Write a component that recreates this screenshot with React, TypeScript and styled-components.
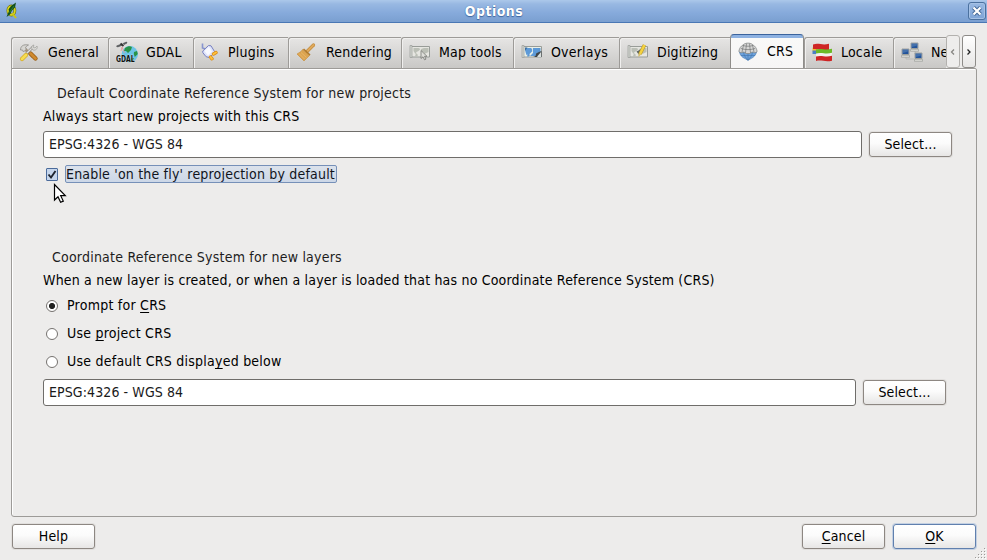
import React from "react";
import styled, { createGlobalStyle, css } from "styled-components";

const GlobalStyle = createGlobalStyle`
  html, body, #root { margin: 0; width: 987px; height: 560px; overflow: hidden; }
  * { box-sizing: border-box; }
  body, button, input {
    font-family: "DejaVu Sans Condensed", "DejaVu Sans", sans-serif;
    font-stretch: condensed;
    font-size: 14px;
    line-height: 16px;
    color: #000;
  }
  svg { display: block; flex: none; }
`;

const Dialog = styled.main`
  width: 987px;
  height: 560px;
  display: flex;
  flex-direction: column;
  background: #edeceb;
  position: relative;
`;

const TitleBar = styled.header`
  height: 23px;
  flex: none;
  display: grid;
  grid-template-columns: 27px 1fr 27px;
  align-items: center;
  padding: 0 0 1px 4px;
  background: linear-gradient(#a7c4e8 0, #98b8e2 3px, #86aadb 12px, #7a9fd0 21px);
  border-top: 1px solid #a9c6e9;
  border-bottom: 1px solid #4a77b4;
`;

const Title = styled.h1`
  margin: 0;
  padding-right: 3px;
  font-size: 14px;
  line-height: 16px;
  font-weight: bold;
  letter-spacing: 0.45px;
  text-align: center;
  color: #fff;
  text-shadow: 0 0 1px #4068a0, 0 1px 1px #4068a0;
`;

const CloseButton = styled.button`
  width: 18px;
  height: 18px;
  justify-self: end;
  margin: 0 1px 0 0;
  padding: 3px;
  border: 1px solid #4b719f;
  border-radius: 3px;
  background: linear-gradient(#98b8e2, #7fa5d7);
  box-shadow: inset 0 0 0 1px #a5c1e5;
`;

const TabRow = styled.nav`
  height: 46px;
  flex: none;
  display: flex;
  align-items: flex-end;
  padding: 0 11px 0 11px;
`;

const TabStrip = styled.div`
  display: flex;
  align-items: flex-end;
  width: 935px;
  height: 35px;
  overflow: hidden;
`;

const Tab = styled.div<{ $w: number; $gap: number; $active?: boolean }>`
  flex: none;
  display: flex;
  align-items: center;
  width: ${(p) => p.$w}px;
  gap: ${(p) => p.$gap}px;
  height: 32px;
  padding: 0 0 2px 7px;
  white-space: nowrap;
  border: 1px solid #9d9b98;
  border-right: 0;
  border-radius: 3px 0 0 0;
  background: linear-gradient(#e6e5e4, #c9c8c6);
  box-shadow: inset 1px 1px 0 #f0efee;
  ${(p) =>
    p.$active &&
    css`
      height: 35px;
      padding-bottom: 3px;
      border: 1px solid #8f8d8a;
      border-top: 1px solid #3b639c;
      border-bottom: 0;
      border-radius: 4px 4px 0 0;
      background: linear-gradient(#8db1e1 0, #8db1e1 3px, #f9f9f8 3px, #f6f5f5 100%);
      box-shadow: none;
    `}
`;

const TabLabel = styled.span`
  letter-spacing: 0.2px;
`;

const ScrollButtons = styled.div`
  display: flex;
  width: 30px;
  height: 34px;
  align-self: flex-end;
  margin-bottom: 0;
  gap: 2px;
`;

const ScrollButton = styled.button<{ $disabled?: boolean }>`
  width: 14px;
  height: 33px;
  padding: 0;
  display: grid;
  place-items: center;
  border: 1px solid ${(p) => (p.$disabled ? "#b3b1ae" : "#8d8b88")};
  border-radius: 3px;
  background: ${(p) => (p.$disabled ? "#eeedec" : "linear-gradient(#fff, #e7e6e5)")};
`;

const Panel = styled.section`
  width: 966px;
  height: 449px;
  flex: none;
  margin: -1px 0 0 11px;
  padding: 16px 24px 0 31px;
  border: 1px solid #9d9b98;
  border-radius: 0 2px 3px 3px;
  background: #edeceb;
  box-shadow: inset 1px 1px 0 #fff;
`;

const Group = styled.fieldset<{ $top?: number }>`
  display: flex;
  flex-direction: column;
  border: 0;
  padding: 0;
  margin: ${(p) => p.$top ?? 0}px 0 0;
`;

const GroupTitle = styled.div<{ $indent: number }>`
  height: 16px;
  margin: 0 0 7px ${(p) => p.$indent}px;
  color: #1d1d1d;
  letter-spacing: 0.215px;
  white-space: nowrap;
`;

const Line = styled.div`
  height: 16px;
  white-space: nowrap;
  letter-spacing: 0.19px;
`;

const FieldRow = styled.div<{ $top: number }>`
  display: flex;
  align-items: center;
  gap: 7px;
  margin-top: ${(p) => p.$top}px;
`;

const Field = styled.input<{ $w: number }>`
  width: ${(p) => p.$w}px;
  height: 27px;
  padding: 0 5px 1px;
  color: #1a1a1a;
  letter-spacing: 0.1px;
  border: 1px solid #6f6d6a;
  border-radius: 3px;
  background: #fff;
  outline: 0;
`;

const Button = styled.button<{ $primary?: boolean }>`
  width: 83px;
  height: 25px;
  padding: 0 0 1px;
  letter-spacing: 0.15px;
  border: 1px solid ${(p) => (p.$primary ? "#6080ae" : "#8d8782")};
  border-radius: 3px;
  background: linear-gradient(#ffffff, #fbfbfb 45%, #e7e6e5);
  box-shadow: ${(p) => (p.$primary ? "0 0 0 1px #c3d0e2" : "0 0 0 1px #e1dfdd")};
`;

const Option = styled.label<{ $top: number }>`
  display: flex;
  align-items: center;
  height: 18px;
  margin: ${(p) => p.$top}px 0 0 3px;
  letter-spacing: 0.24px;
  white-space: nowrap;
`;

const CheckBox = styled.span`
  width: 12px;
  height: 13px;
  margin: 1px 7px 0 0;
  border: 1px solid #4b6b9b;
  border-radius: 1px;
  background: #c6d6ec;
`;

const FocusLabel = styled.span`
  width: 272px;
  height: 18px;
  color: #10141c;
  letter-spacing: 0.19px;
  border: 1px solid #7690b8;
  border-radius: 2px;
  background: linear-gradient(#dce2eb, #ccd7e7);
`;

const Radio = styled.span<{ $on?: boolean }>`
  width: 12px;
  height: 12px;
  margin: 2px 9px 0 0;
  border: 1px solid #75726f;
  border-radius: 50%;
  background: ${(p) =>
    p.$on ? "radial-gradient(circle, #222 0, #222 2.7px, #fff 3.4px)" : "#fff"};
`;

const Key = styled.span`
  text-decoration: underline;
  text-decoration-thickness: 1px;
  text-underline-offset: 2px;
  text-decoration-skip-ink: none;
`;

const Footer = styled.footer`
  display: flex;
  gap: 8px;
  padding: 7px 11px 0 12px;
`;

const Spacer = styled.span`
  flex: 1;
`;

const Grip = styled.svg`
  position: absolute;
  right: 0;
  bottom: 0;
`;

const Cursor = styled.svg`
  position: absolute;
  left: 53px;
  top: 183px;
`;

const Logo = () => (
  <svg width="14" height="18" viewBox="0 0 14 18">
    <ellipse cx="7.4" cy="8.5" rx="3.4" ry="4.4" fill="none" stroke="#6e7010" strokeWidth="3" />
    <ellipse cx="7.4" cy="8.5" rx="3.4" ry="4.4" fill="none" stroke="#dcd820" strokeWidth="1.8" />
    <path d="M8 11l4 5" stroke="#c9c51c" strokeWidth="2" />
    <path d="M2.500 15L5 9l-.5-1.500L7 4l5-3.500-1 5-3 3-2 4z" fill="#14501c" />
    <path d="M5.500 10.500l4.500-6.500" stroke="#2d8430" />
  </svg>
);

const Tools = () => (
  <svg width="20" height="20" viewBox="0 0 20 20">
    <path d="M5 6l9 9" stroke="#a79377" strokeWidth="3" />
    <path d="M11.500 11.500l5 5" stroke="#9b5f17" strokeWidth="4.400" strokeLinecap="round" />
    <path d="M11.500 11.500l5 5" stroke="#d08a2e" strokeWidth="2.800" strokeLinecap="round" />
    <path d="M1.500 8c0-4 3-6 8-5-2 1-3 2-3 3l1 1-3 3-1-2z" fill="#d7d6d2" stroke="#8d8c88" strokeWidth=".8" />
    <path d="M7 12l7-7" stroke="#8d8c88" strokeWidth="2.500" />
    <path d="M7 12l7-7" stroke="#e2e1df" strokeWidth="1.300" />
    <path d="M13 7c-1-2 0-4 2-4l-1 2 2 1 2-2c1 2-1 5-4 4z" fill="#dcdbd8" stroke="#969591" strokeWidth=".6" />
    <path d="M3 17l4-4" stroke="#d3ad2b" strokeWidth="4.200" strokeLinecap="round" />
    <path d="M3 17l4-4" stroke="#f6dc50" strokeWidth="2.800" strokeLinecap="round" />
  </svg>
);

const GdalText = styled.text`
  font: bold 7.5px "DejaVu Sans Condensed", "DejaVu Sans", sans-serif;
  fill: #111;
  paint-order: stroke;
  stroke: #d8e5e8;
  stroke-width: 0.6px;
`;

const Gdal = () => (
  <svg width="23" height="22" viewBox="0 0 23 22">
    <circle cx="13.800" cy="13.200" r="8.200" fill="#6cc4e6" />
    <path d="M9 7c3-2 5-2 7-1l-1 3-3 3-2-2-2 0zM18 11l3-1 .8 3-3 3-1-3zM15 17h3l-2 4h-2z" fill="#299447" />
    <path d="M6 6l2.500 6M6 6L5 10" stroke="#e09a9a" strokeWidth=".9" />
    <path d="M.5 5l4-1.500 1 1-4 1.500zM7 2.500l3.500-1.500.5 1-3 1.500z" fill="#65686a" stroke="#3f4244" strokeWidth=".6" />
    <path d="M4.500 2.500l3 2.500" stroke="#333" strokeWidth="2" />
    <GdalText transform="translate(0 20.500) scale(1 1.180)" textLength="18.500" lengthAdjust="spacingAndGlyphs">GDAL</GdalText>
  </svg>
);

const Plug = () => (
  <svg width="18" height="18" viewBox="0 0 18 18">
    <path d="M1.500 .5v4.500l3 1" fill="none" stroke="#8795d0" strokeWidth="1.600" />
    <path d="M1.800 8l5.700-5.500 2.500.3 3.500 5.700-.2 1.600-5.200 4.400-3-.8-3.300-4z" fill="#dfe4fa" stroke="#7880c0" />
    <path d="M3.500 8l4.500-4 3 4.500-4 4z" fill="#f8f9ff" />
    <path d="M12.500 11l2.500-1.500M9.500 14l1.500 1.800" stroke="#d98b17" strokeWidth="3.400" strokeLinecap="round" />
    <path d="M12.500 11l2.500-1.500M9.500 14l1.500 1.800" stroke="#ffc13a" strokeWidth="2" strokeLinecap="round" />
  </svg>
);

const Broom = () => (
  <svg width="20" height="20" viewBox="0 0 20 20">
    <path d="M11 9.500l6.500-6.500" stroke="#c28a3a" strokeWidth="3.200" strokeLinecap="round" />
    <path d="M11 9.500l6.500-6.500" stroke="#dfa95c" strokeWidth="2" strokeLinecap="round" />
    <path d="M6.500 7.500l7 6-1.500 1.500-4 4-7-7 4-2.500z" fill="#dca450" stroke="#c48d3d" strokeWidth=".6" />
    <path d="M3 11.500l5.500 5.500M5 10.500l5.500 5" stroke="#edbd73" strokeWidth=".7" />
    <path d="M7.500 7l6.500 6" stroke="#b07a2c" strokeWidth="1.600" />
  </svg>
);

const MapIcon = ({ kind }: { kind: "tools" | "overlay" | "edit" }) => (
  <svg width="22" height="18" viewBox="0 0 22 18">
    <path d="M2.500 3.500h18v10.500h-18z" fill={kind === "overlay" ? "#e9efe8" : "#e6e6e1"} stroke="#989c98" />
    <path d="M1 2.500h2v12H1z" fill="#d5d7d2" stroke="#999c99" strokeWidth=".7" />
    <path
      d="M4.500 5h5l2 1-2 2-2 1-1 2-2-3zM12 6l3-1h4.500v4l-2 1-2 1-1-2-2 1zM7 10l2 2-1 1.500H6z"
      fill={kind === "overlay" ? "#5d96d0" : "#bbbfb6"}
    />
    {kind === "tools" && (
      <path d="M12 7.500v8l2-1.700 1.500 3 1.500-.7-1.500-2.800H18z" fill="#dededa" stroke="#777975" strokeWidth=".8" />
    )}
    {kind === "overlay" && (
      <>
        <path d="M4.500 5h5l2 3-3 3-3 1-1-3zM12 5h5l1 2-3 3 1 3H9l3-3z" fill="#5d9ad8" />
        <path d="M4 4.500h2.500L4 8z" fill="#3c6b9c" />
        <path d="M18 9l2.500-1v6H12c3-.5 3-2 3-3.500z" fill="#3f4548" />
        <path d="M17 12.500l3-3.500v5h-4z" fill="#d8dedd" />
      </>
    )}
    {kind === "edit" && (
      <>
        <path d="M9.500 8.500l4-2 2 1-3 5z" fill="#5d6561" />
        <path d="M13 11l4.500-9" stroke="#bd9a24" strokeWidth="3.500" />
        <path d="M13 11l4.500-9" stroke="#f4d340" strokeWidth="2.400" />
        <path d="M11.300 14l.3-4 2.600 1.400z" fill="#d7bd6b" />
      </>
    )}
  </svg>
);

const Globe = () => (
  <svg width="20" height="20" viewBox="0 0 20 20">
    <path d="M1.500 11h17c-.5 3-3 5.500-5.500 6.500L10 19.500l-3-2C4 16.500 2 14 1.500 11z" fill="#6da2dc" stroke="#5182b8" strokeWidth=".7" />
    <path d="M5.500 11c.5 4 2.500 6 4.500 8 2-2 4-4 4.500-8M10 11v8M3 14.500h14" fill="none" stroke="#4578b0" strokeWidth=".7" />
    <path d="M.8 10.500C1.500 7 3 5 5 4c2-2.500 8-2.500 10 0 2 1 3.500 3 4.200 6.500L17 11.800l-3-.8-2 1.500H8L6 11l-3 .8z" fill="#d6d6d5" stroke="#888b8b" strokeWidth=".8" />
    <path d="M5 4.500c3 1 7 1 10 0M3 7.500c4 1.500 10 1.500 14 0M5.500 4L4 11M8.500 2.500L7.500 12M11.500 2.500l1 9.500M14.500 4L16 11" fill="none" stroke="#747777" strokeWidth=".7" />
  </svg>
);

const Flags = () => (
  <svg width="22" height="20" viewBox="0 0 22 20">
    <path d="M.5 5.500h5v4h-5z" fill="#f0c52e" />
    <path d="M.5 8.500h5V12h-5z" fill="#4a7fc4" />
    <path d="M1 2.500c6-2 9 1.500 16-.7V8C11 9.500 7 6.500 1 7z" fill="#cf2626" />
    <path d="M4 7.500c6-1.800 9 1.300 16-.8v5C13 13.500 10 10.500 4 12z" fill="#6cba26" />
    <path d="M4 11.500c6-1.800 9 1.300 16-.8v4C13 16.500 10 13.500 4 15z" fill="#f2f1ec" />
    <path d="M4 14.500c6-1.800 9 1.300 16-.8v5C13 20.500 10 17.500 4 19z" fill="#cf2424" />
  </svg>
);

const Computer = ({ x, y }: { x: number; y: number }) => (
  <g transform={`translate(${x} ${y})`}>
    <path d="M.5.5h7v5.500h-7z" fill="#c9cbc8" stroke="#91938f" strokeWidth=".8" />
    <path d="M1 1h6v4.500H1z" fill="#24549a" />
    <path d="M1.500 1.500h5V3L1.500 4.500z" fill="#4471ac" />
    <path d="M0 6.800h8v2H0z" fill="#d9dad6" stroke="#969894" strokeWidth=".6" />
  </g>
);

const Network = () => (
  <svg width="22" height="20" viewBox="0 0 22 20">
    <path d="M5 15v2h8M14 7v5" fill="none" stroke="#b9bab6" />
    <Computer x={9.5} y={0.5} />
    <Computer x={0.5} y={6.5} />
    <Computer x={13.5} y={10.5} />
  </svg>
);

const Arrow = ({ left }: { left?: boolean }) => (
  <svg width="6" height="8" viewBox="0 0 6 8">
    <path d={left ? "M4 1.500L1.500 4 4 6.500" : "M1.500 1.500L4 4 1.500 6.500"} fill="none" stroke={left ? "#888683" : "#222"} strokeWidth="1.300" />
  </svg>
);

const tabs = [
  { label: "General", w: 97, gap: 9, icon: <Tools /> },
  { label: "GDAL", w: 85, gap: 7, icon: <Gdal /> },
  { label: "Plugins", w: 95, gap: 9, icon: <Plug /> },
  { label: "Rendering", w: 113, gap: 10, icon: <Broom /> },
  { label: "Map tools", w: 112, gap: 8, icon: <MapIcon kind="tools" /> },
  { label: "Overlays", w: 106, gap: 8, icon: <MapIcon kind="overlay" /> },
  { label: "Digitizing", w: 111, gap: 8, icon: <MapIcon kind="edit" /> },
  { label: "CRS", w: 74, gap: 9, icon: <Globe />, active: true },
  { label: "Locale", w: 89, gap: 7, icon: <Flags /> },
  { label: "Network", w: 100, gap: 8, icon: <Network /> },
];

export default function App() {
  return (
    <Dialog>
      <GlobalStyle />
      <TitleBar>
        <Logo />
        <Title>Options</Title>
        <CloseButton aria-label="Close">
          <svg width="10" height="10" viewBox="0 0 10 10">
            <path d="M1.500 1.500l7 7M8.500 1.500l-7 7" stroke="#426796" strokeWidth="4" />
            <path d="M1.500 1.500l7 7M8.500 1.500l-7 7" stroke="#fff" strokeWidth="2.200" />
          </svg>
        </CloseButton>
      </TitleBar>
      <TabRow>
        <TabStrip>
          {tabs.map((t) => (
            <Tab key={t.label} $w={t.w} $gap={t.gap} $active={t.active}>
              {t.icon}
              <TabLabel>{t.label}</TabLabel>
            </Tab>
          ))}
        </TabStrip>
        <ScrollButtons>
          <ScrollButton $disabled aria-label="Scroll left"><Arrow left /></ScrollButton>
          <ScrollButton aria-label="Scroll right"><Arrow /></ScrollButton>
        </ScrollButtons>
      </TabRow>
      <Panel>
        <Group>
          <GroupTitle $indent={14}>Default Coordinate Reference System for new projects</GroupTitle>
          <Line>Always start new projects with this CRS</Line>
          <FieldRow $top={7}>
            <Field $w={819} defaultValue="EPSG:4326 - WGS 84" />
            <Button>Select...</Button>
          </FieldRow>
          <Option $top={7}>
            <CheckBox>
              <svg width="10" height="11" viewBox="0 0 10 11">
                <path d="M1.500 5.500l2.500 3L8.500 2" fill="none" stroke="#1d232e" strokeWidth="1.900" />
              </svg>
            </CheckBox>
            <FocusLabel>Enable 'on the fly' reprojection by default</FocusLabel>
          </Option>
        </Group>
        <Group $top={66}>
          <GroupTitle $indent={9}>Coordinate Reference System for new layers</GroupTitle>
          <Line>When a new layer is created, or when a layer is loaded that has no Coordinate Reference System (CRS)</Line>
          <Option $top={8}>
            <Radio $on />
            <span>Prompt for <Key>C</Key>RS</span>
          </Option>
          <Option $top={10}>
            <Radio />
            <span>Use <Key>p</Key>roject CRS</span>
          </Option>
          <Option $top={10}>
            <Radio />
            <span>Use default CRS displa<Key>y</Key>ed below</span>
          </Option>
          <FieldRow $top={9}>
            <Field $w={813} defaultValue="EPSG:4326 - WGS 84" />
            <Button>Select...</Button>
          </FieldRow>
        </Group>
      </Panel>
      <Footer>
        <Button>Help</Button>
        <Spacer />
        <Button><Key>C</Key>ancel</Button>
        <Button $primary><Key>O</Key>K</Button>
      </Footer>
      <Grip width="13" height="13" viewBox="0 0 13 13">
        {[[10, 1], [10, 4], [7, 4], [10, 7], [7, 7], [4, 7], [10, 10], [7, 10], [4, 10], [1, 10]].map(([x, y]) => (
          <g key={`${x}-${y}`}>
            <rect x={x + 1} y={y + 1} width="1" height="1" fill="#fff" />
            <rect x={x} y={y} width="1" height="1" fill="#9b9996" />
          </g>
        ))}
      </Grip>
      <Cursor width="14" height="22" viewBox="0 0 14 22">
        <path d="M1.500 1.500v15.500l3.500-3.300 2.600 5.600 2.700-1.200-2.600-5.400h4.600z" fill="#fff" stroke="#000" strokeWidth="1.200" />
      </Cursor>
    </Dialog>
  );
}
